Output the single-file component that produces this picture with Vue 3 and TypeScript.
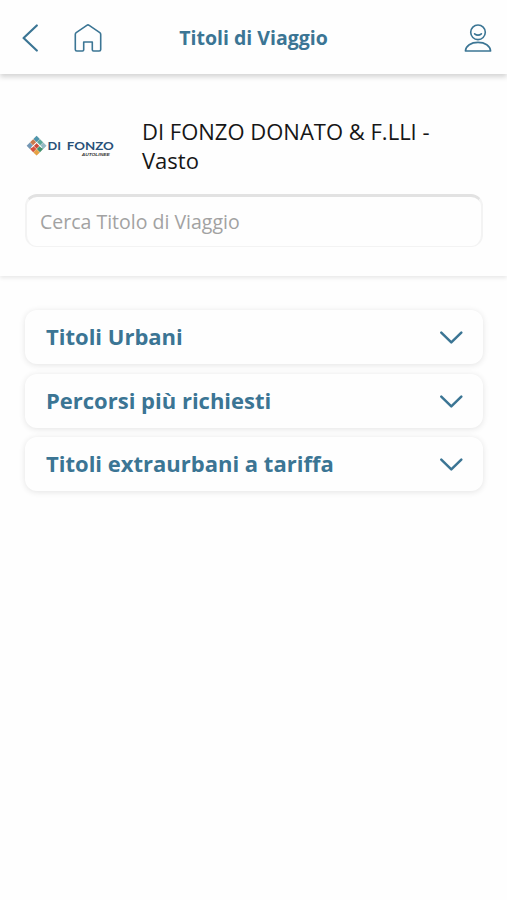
<script setup lang="ts">
import { ref } from 'vue'

const query = ref('')
const groups: string[] = ['Titoli Urbani', 'Percorsi più richiesti', 'Titoli extraurbani a tariffa']
</script>

<template>
  <div class="screen">
    <header class="topbar">
      <div class="side">
        <button class="icon-button" aria-label="Indietro">
          <svg class="back" width="18" height="30" viewBox="0 0 18 30">
            <path d="M16.8 2.5 3.6 15 16.8 27.5" />
          </svg>
        </button>
        <button class="icon-button" aria-label="Home">
          <svg class="home" width="28" height="30" viewBox="0 0 28 30">
            <path d="M1.3 11.4Q1.3 10.3 2.2 9.7L12.8 2.3Q14 1.5 15.2 2.3L25.8 9.7Q26.7 10.3 26.7 11.4V26.5Q26.7 28 25.2 28H19.5Q18.3 28 18.3 26.8V19H9.7V26.8Q9.7 28 8.5 28H2.8Q1.3 28 1.3 26.5Z" />
          </svg>
        </button>
      </div>
      <h1>Titoli di Viaggio</h1>
      <div class="side end">
        <button class="icon-button" aria-label="Profilo">
          <svg class="user" width="28" height="30" viewBox="0 0 28 30">
            <circle cx="14" cy="9.3" r="7.3" />
            <path d="M10.6 10.8Q14 13.5 17.4 10.8" />
            <path d="M1.4 28C1.8 22.7 7 19.4 14 19.4S26.2 22.7 26.6 28Z" />
          </svg>
        </button>
      </div>
    </header>

    <section class="provider">
      <div class="company">
        <svg class="logo" width="88" height="24" viewBox="0 0 88 24" role="img">
          <g transform="translate(10.6 10.7) rotate(45)">
            <rect x="-7" y="-7" width="14" height="14" fill="#e9e6dc" />
            <rect x="-7" y="-7" width="4.5" height="4.5" fill="#4f95ac" />
            <rect x="-2.2" y="-7" width="4.4" height="4.5" fill="#5ba79b" />
            <rect x="2.5" y="-7" width="4.5" height="4.5" fill="#93b9c4" />
            <rect x="-7" y="-2.2" width="4.5" height="4.4" fill="#c9794c" />
            <rect x="2.5" y="-2.2" width="4.5" height="4.4" fill="#439270" />
            <rect x="-7" y="2.5" width="4.5" height="4.5" fill="#7397b5" />
            <rect x="-2.2" y="2.5" width="4.4" height="4.5" fill="#d6533e" />
            <rect x="2.5" y="2.5" width="4.5" height="4.5" fill="#e6a144" />
            <rect x="-2" y="-2" width="4" height="4" fill="#cc4a38" />
            <path d="M-2.3 5V-2.3H5" fill="none" stroke="#fff" stroke-width="1" />
          </g>
          <text class="brand" x="21.6" y="14.8" textLength="13.5" lengthAdjust="spacingAndGlyphs">DI</text>
          <text class="brand" x="40.8" y="14.8" textLength="47" lengthAdjust="spacingAndGlyphs">FONZO</text>
          <text class="tagline" x="55.7" y="20.6" textLength="28" lengthAdjust="spacingAndGlyphs">AUTOLINEE</text>
        </svg>
        <p class="name">DI FONZO DONATO &amp; F.LLI - Vasto</p>
      </div>
      <input v-model="query" class="search" type="text" placeholder="Cerca Titolo di Viaggio">
    </section>

    <main class="groups">
      <button v-for="group in groups" :key="group" class="group">
        <span>{{ group }}</span>
        <svg width="24" height="16" viewBox="0 0 24 16">
          <path d="M2.3 3.6 12.3 13.4 22.3 3.6" />
        </svg>
      </button>
    </main>
  </div>
</template>

<style>
body {
  background: #fefefe;
}
</style>

<style scoped>
.screen {
  min-height: 900px;
  font-family: 'Open Sans', sans-serif;
  background: #fefefe;
}

button {
  margin: 0;
  border: 0;
  background: none;
  font-family: inherit;
}

svg {
  display: block;
  flex: none;
}

.topbar {
  position: relative;
  display: grid;
  grid-template-columns: 1fr auto 1fr;
  align-items: center;
  box-sizing: border-box;
  height: 74px;
  padding: 2px 15px 0;
  background: #fefefe;
  box-shadow: 0 3px 5px rgba(0, 0, 0, 0.17);
}

.side {
  display: flex;
  align-items: center;
  gap: 36px;
  padding-left: 5px;
}

.end {
  justify-content: flex-end;
  padding-left: 0;
}

.icon-button {
  padding: 0;
}

.icon-button path,
.icon-button circle,
.group path {
  fill: none;
  stroke: #3b7594;
  stroke-width: 1.6;
  stroke-linecap: round;
  stroke-linejoin: round;
}

.icon-button .back path {
  stroke-width: 2.2;
}

h1 {
  margin: 0;
  color: #3b7594;
  font-size: 19.5px;
  font-weight: 700;
  line-height: 26px;
}

.provider {
  box-sizing: border-box;
  height: 202px;
  padding: 44px 25px 0;
  box-shadow: 0 2px 4px rgba(0, 0, 0, 0.09);
}

.company {
  display: flex;
  align-items: center;
  gap: 28px;
  height: 58px;
}

.logo {
  margin: 0 0 0 1px;
}

.brand {
  fill: #285078;
  font: 700 10.8px Lato, sans-serif;
}

.tagline {
  fill: #333;
  font: italic 700 4.4px 'Liberation Sans', sans-serif;
}

.name {
  margin: 0 0 2px;
  color: #161616;
  font-size: 22px;
  line-height: 29px;
}

.search {
  display: block;
  box-sizing: border-box;
  width: 458px;
  height: 53px;
  margin: 18px 0 0;
  padding: 0 13px;
  border: 2px solid #f3f3f3;
  border-top: 3px solid #e2e2e2;
  border-bottom-width: 1px;
  border-radius: 12px;
  outline: 0;
  background: #fefefe;
  color: #161616;
  font: 400 19.5px 'Open Sans', sans-serif;
}

.search::placeholder {
  color: #a2a2a2;
  opacity: 1;
}

.groups {
  display: flex;
  flex-direction: column;
  gap: 9.5px;
  padding: 34px 24px 0 25px;
}

.group {
  display: flex;
  align-items: center;
  justify-content: space-between;
  height: 54px;
  padding: 0 20px 0 21px;
  border-radius: 12px;
  background: #fefefe;
  box-shadow: 0 1px 6px rgba(0, 0, 0, 0.11);
  color: #3b7594;
  font-size: 22px;
  font-weight: 700;
  line-height: 30px;
}

.group span {
  padding-bottom: 1.8px;
}

.group path {
  stroke-width: 2.5;
}
</style>
